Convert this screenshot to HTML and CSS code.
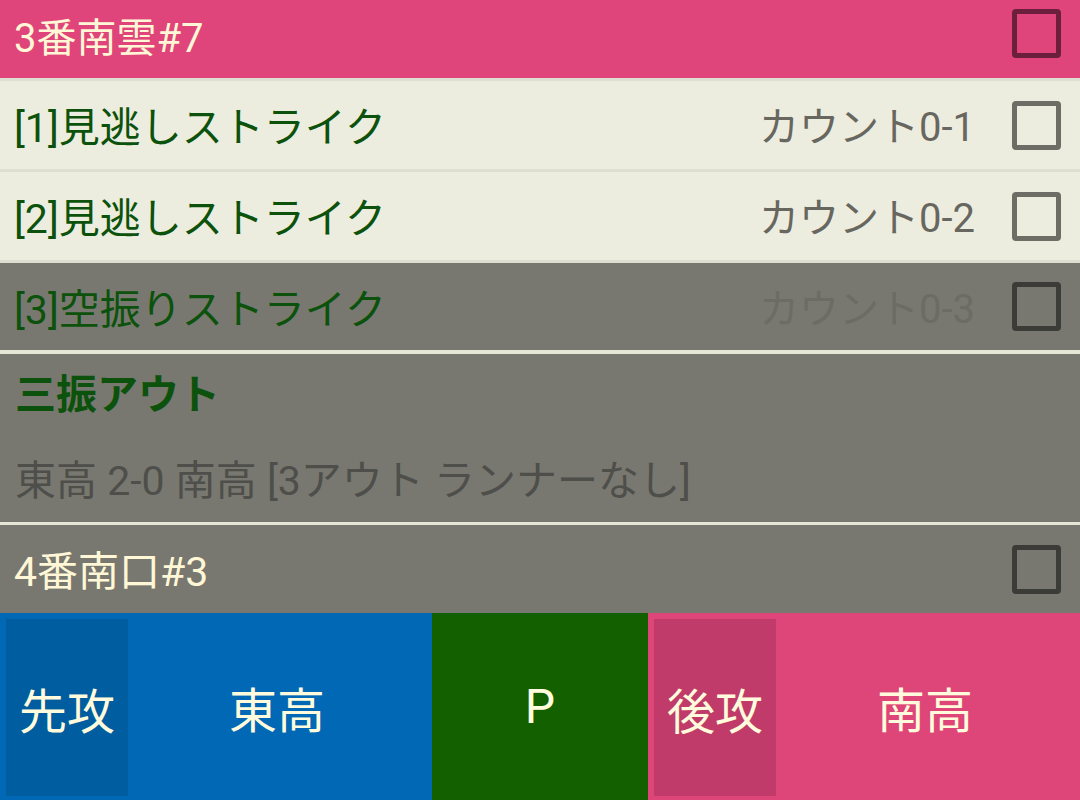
FILE: index.html
```html
<!DOCTYPE html>
<html lang="ja">
<head>
  <meta charset="UTF-8" />
  <meta name="viewport" content="width=device-width, initial-scale=1" />
  <title>スコアブック</title>
  <link rel="stylesheet" href="styles.css">
</head>
<body>

  <main class="plays">
    <div class="row batter batter-away">
      <span class="label">3番南雲#7</span>
      <span class="check"></span>
    </div>

    <div class="row pitch">
      <span class="label">[1]見逃しストライク</span>
      <span class="count">カウント0-1</span>
      <span class="check"></span>
    </div>

    <div class="row pitch">
      <span class="label">[2]見逃しストライク</span>
      <span class="count">カウント0-2</span>
      <span class="check"></span>
    </div>

    <div class="row pitch done">
      <span class="label">[3]空振りストライク</span>
      <span class="count">カウント0-3</span>
      <span class="check"></span>
    </div>

    <div class="result">
      <div class="result-title">三振アウト</div>
      <div class="result-score">東高 2-0 南高 [3アウト ランナーなし]</div>
    </div>

    <div class="row batter batter-next">
      <span class="label">4番南口#3</span>
      <span class="check"></span>
    </div>
  </main>

  <footer class="teams">
    <div class="team team-first">
      <span class="side">先攻</span>
      <span class="name">東高</span>
    </div>
    <div class="pitcher">P</div>
    <div class="team team-second">
      <span class="side">後攻</span>
      <span class="name">南高</span>
    </div>
  </footer>

</body>
</html>
```

FILE: styles.css
```css
body {
  margin: 0;
  width: 1080px;
  height: 800px;
  display: flex;
  flex-direction: column;
  font-family: Roboto, "Noto Sans CJK JP", sans-serif;
  background: #787870;
  overflow: hidden;
}

.plays {
  flex: 1;
  display: flex;
  flex-direction: column;
}

.row {
  display: flex;
  align-items: center;
  height: 88px;
  padding: 0 19px 0 14px;
  font-size: 41px;
  line-height: 48px;
  border-top: 3px solid #dddfd0;
}

.row .label {
  flex: 1;
  padding-top: 6px;
}

.check {
  width: 39px;
  height: 39px;
  border: 5px solid #6d6d65;
  border-radius: 4px;
}

/* batter rows */
.batter {
  color: #fff7d6;
}

.batter-away {
  height: 78px;
  border-top: none;
  background: #df457a;
  font-size: 40px;
}

.batter-away .label {
  padding-top: 0;
}

.batter-away .check {
  border-color: #6b1f3d;
  margin-bottom: 11px;
}

.batter-next {
  background: #787870;
}

.batter-next .check {
  border-color: #3b3b37;
}

/* pitches */
.pitch {
  background: #ededdf;
  color: #0c520c;
}

.pitch .count {
  font-size: 40px;
  color: #67675f;
  margin-right: 37px;
  padding-top: 6px;
}

.pitch.done {
  height: 87px;
  background: #787870;
}

.pitch.done .count {
  color: #6c6c66;
}

.pitch.done .check {
  border-color: #3b3b37;
}

/* result of the at-bat */
.result {
  height: 175px;
  box-sizing: border-box;
  padding: 17px 15px;
  border-top: 4px solid #e6e6d5;
  border-bottom: 3px solid #e6e6d5;
  background: #787870;
  font-size: 41px;
  line-height: 48px;
}

.result-title {
  color: #0c520c;
  font-weight: 700;
}

.result-score {
  margin-top: 38px;
  color: #4e4e4a;
}

.result + .row {
  border-top: none;
}

/* team bar */
.teams {
  height: 187px;
  display: flex;
  color: #fffbdc;
  font-size: 48px;
}

.team {
  width: 432px;
  display: flex;
}

.team-first {
  background: #0068b4;
}

.team-second {
  background: #de4579;
}

.side {
  width: 122px;
  margin: 6px 0 4px 6px;
  display: flex;
  align-items: center;
  justify-content: center;
}

.team-first .side {
  background: #005d9f;
}

.team-second .side {
  background: #c13b6a;
}

.name {
  flex: 1;
  display: flex;
  align-items: center;
  justify-content: center;
  padding-right: 6px;
}

.pitcher {
  width: 216px;
  background: #126000;
  display: flex;
  align-items: center;
  justify-content: center;
}
```
